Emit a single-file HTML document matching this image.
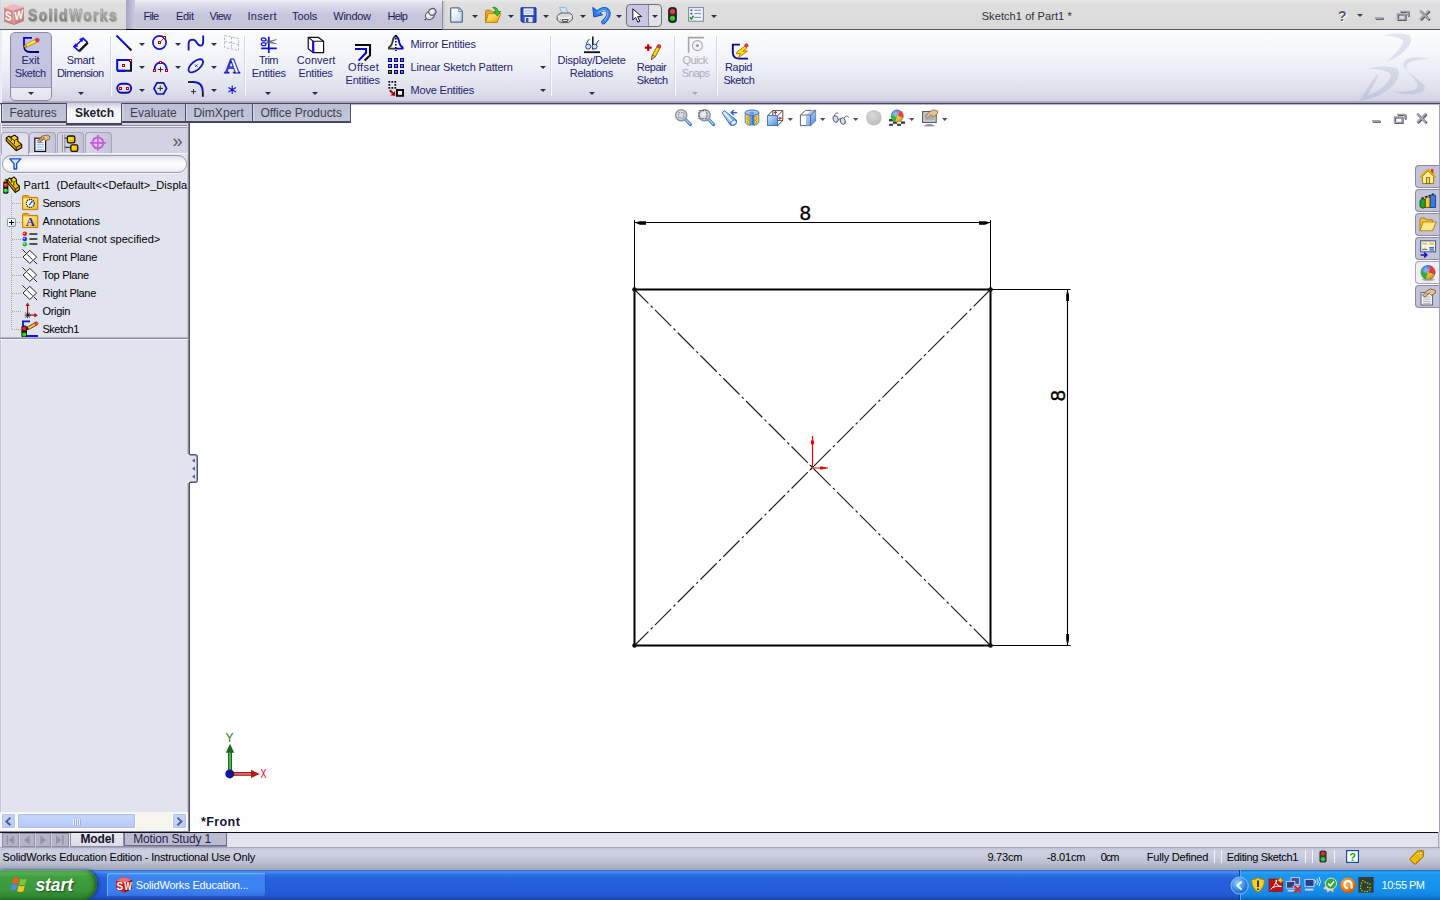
<!DOCTYPE html>
<html lang="en">
<head>
<meta charset="utf-8">
<title>Sketch1 of Part1 * - SolidWorks</title>
<style>
*{box-sizing:border-box;margin:0;padding:0}
html,body{width:1440px;height:900px;overflow:hidden;background:#fff}
body{position:relative;font-family:"Liberation Sans","DejaVu Sans",sans-serif;font-size:11px;color:#000;line-height:13px}
.abs{position:absolute}
svg{position:absolute;overflow:visible}
.t{position:absolute;white-space:nowrap}
#titlebar{left:0;top:0;width:1440px;height:29px;background:linear-gradient(#e8e8e8 0,#dedede 4px,#dadada 27px)}
#menus{left:135px;top:0;width:307px;height:28px;background:linear-gradient(#eeeef8 0,#dedeee 4px,#c6c6da 15px,#c4c4d8 27px)}
#menugrad{left:126px;top:0;width:9px;height:29px;background:linear-gradient(90deg,#a4a4c4,#cacae0)}
#ribbon{left:0;top:30px;width:1440px;height:73px;background:linear-gradient(#fbfcfe 0,#f6f7fb 20px,#eceef6 40px,#dfe1ed 58px,#d5d7e5 68px,#cdd0e0 73px)}
.sep{position:absolute;top:36px;width:2px;height:60px;background:linear-gradient(90deg,#d4d4e2 50%,#fcfcff 50%)}
.dd{position:absolute;width:0;height:0;border-left:3px solid transparent;border-right:3px solid transparent;border-top:3px solid #2c2c50}
.tab{position:absolute;top:104px;height:19px;background:linear-gradient(#bcbed2,#c4c6d9);border:1px solid #4e5068;border-top:none;border-bottom:2px solid #46485e;box-shadow:inset 1px 0 0 #d6d8e6}
#left{left:0;top:123px;width:188px;height:708px;background:#e1e4ee}
#btabs{left:0;top:833px;width:1440px;height:15px;background:#e1e4ee}
#status{left:0;top:847px;width:1440px;height:23px;background:linear-gradient(#8a8c9e 0,#c0c2d4 1px,#cdd0e0 4px,#cacddd 9px,#bec1d3 15px,#adb0c4 20px,#a2a5ba 23px)}
#taskbar{left:0;top:870px;width:1440px;height:30px;background:linear-gradient(#3168d5 0,#4993e6 2px,#2f75e8 4px,#2562df 8px,#245ddb 20px,#2156cf 26px,#1941a5 30px)}
</style>
</head>
<body>
<!-- ===== TITLE / MENU BAR ===== -->
<div id="titlebar" class="abs"></div>
<div id="menugrad" class="abs"></div>
<div id="menus" class="abs"></div>
<div class="abs" style="left:0;top:29px;width:126px;height:1px;background:#585868"></div>
<div class="abs" style="left:126px;top:29px;width:316px;height:1px;background:#000"></div>
<div class="abs" style="left:442px;top:29px;width:998px;height:1px;background:#54545e"></div>
<div class="abs" style="left:135px;top:28px;width:307px;height:1px;background:#dcdcee"></div>
<div class="abs" style="left:442px;top:1px;width:4px;height:28px;background:linear-gradient(90deg,#8e8e96 0,#8e8e96 1px,#c8c8cc 1px,#dcdcde 4px)"></div>
<div class="abs" style="left:0;top:0;width:1px;height:28px;background:#d4d4ec"></div>
<div id="logo">
<svg style="left:3px;top:3px" width="24" height="24" viewBox="3 3 24 24">
 <polygon points="4,7.5 13.3,4.2 24,7 13.5,10.3" fill="#ecbcbc"/>
 <polygon points="4,7.5 13.5,10.3 14,24.5 4,21" fill="#d88a8a"/>
 <polygon points="13.5,10.3 24,7 24,20.5 14,24.5" fill="#cf8282"/>
 <path d="M4 7.5 L13.5 10.3 L24 7 M13.5 10.3 L14 24.5" fill="none" stroke="#e8b4b4" stroke-width=".8"/>
 <path d="M4 21 L14 24.5 L24 20.5" fill="none" stroke="#b87070" stroke-width=".9"/>
 <text x="5" y="19.6" font-family="Liberation Sans,sans-serif" font-weight="bold" font-size="12.5" fill="#fff" transform="skewY(14)" style="transform-origin:5px 19px" textLength="6.6" lengthAdjust="spacingAndGlyphs">S</text>
 <text x="14.4" y="20.8" font-family="Liberation Sans,sans-serif" font-weight="bold" font-size="12.5" fill="#fff" textLength="8.8" lengthAdjust="spacingAndGlyphs" transform="skewY(-18)" style="transform-origin:14.4px 20.8px">W</text>
</svg>
<span class="t" style="left:28px;top:5.8px;font-size:16.5px;line-height:18px;color:#7c7c7c;transform:scaleX(0.830);transform-origin:0 0;font-weight:bold;letter-spacing:1.8px;filter:drop-shadow(1px 1px 0.6px #b4b4b4);-webkit-text-stroke:.4px #8a8a8a;"><b style="background:linear-gradient(#a8a8a8 5px,#646464 19px);-webkit-background-clip:text;background-clip:text;color:transparent">Solid</b><b style="background:linear-gradient(#c0c0c0 5px,#7c7c7c 19px);-webkit-background-clip:text;background-clip:text;color:transparent">Works</b></span>
</div>
<span class="t" style="left:143.5px;top:9.7px;font-size:11px;line-height:13px;color:#1c1c58;letter-spacing:-0.74px;">File</span>
<span class="t" style="left:176px;top:9.7px;font-size:11px;line-height:13px;color:#1c1c58;letter-spacing:-0.32px;">Edit</span>
<span class="t" style="left:209.6px;top:9.7px;font-size:11px;line-height:13px;color:#1c1c58;letter-spacing:-0.72px;">View</span>
<span class="t" style="left:247.5px;top:9.7px;font-size:11px;line-height:13px;color:#1c1c58;letter-spacing:0.30px;">Insert</span>
<span class="t" style="left:292px;top:9.7px;font-size:11px;line-height:13px;color:#1c1c58;letter-spacing:-0.10px;">Tools</span>
<span class="t" style="left:333.3px;top:9.7px;font-size:11px;line-height:13px;color:#1c1c58;letter-spacing:-0.28px;">Window</span>
<span class="t" style="left:387.5px;top:9.7px;font-size:11px;line-height:13px;color:#1c1c58;letter-spacing:-0.77px;">Help</span>
<span class="t" style="left:981.7px;top:9.7px;font-size:11px;line-height:13px;color:#303038;letter-spacing:0.08px;">Sketch1 of Part1 *</span>
<!-- pin -->
<svg style="left:424px;top:7px" width="14" height="15" viewBox="424 7 14 15">
 <defs><radialGradient id="gpin" cx=".4" cy=".35" r=".8"><stop offset="0" stop-color="#ffffff"/><stop offset=".6" stop-color="#d8d8e0"/><stop offset="1" stop-color="#9c9cb0"/></radialGradient></defs>
 <path d="M427.4 17.4 L424.8 20" stroke="#303038" stroke-width="1.3"/>
 <path d="M425.8 17.8 L424.6 19" stroke="#f4f4f8" stroke-width=".9"/>
 <ellipse cx="429.9" cy="15.5" rx="4.6" ry="3.9" fill="url(#gpin)" stroke="#54546c" stroke-width="1.1" transform="rotate(-30 429.9 15.5)"/>
 <ellipse cx="432.4" cy="11.9" rx="3.6" ry="3.3" fill="url(#gpin)" stroke="#54546c" stroke-width="1.1" transform="rotate(-30 432.4 11.9)"/>
</svg>
<!-- new doc -->
<svg style="left:449px;top:6px" width="15" height="18" viewBox="449 6 15 18">
 <defs><linearGradient id="gdoc" x1="0" y1="0" x2="1" y2="1"><stop offset=".2" stop-color="#ffffff"/><stop offset="1" stop-color="#b8d0e8"/></linearGradient></defs>
 <path d="M451.6 7.8 H459 L462.3 11.2 V21.2 Q462.3 22.2 461.3 22.2 H451.6 Q450.7 22.2 450.7 21.2 V8.8 Q450.7 7.8 451.6 7.8 Z" fill="url(#gdoc)" stroke="#52708e" stroke-width="1.3"/>
 <path d="M458.8 8.2 V11.6 H462" fill="#dce8f4" stroke="#6a88a6" stroke-width=".9"/>
</svg>
<div class="dd" style="left:472px;top:15px"></div>
<!-- open -->
<svg style="left:484px;top:6px" width="18" height="18" viewBox="484 6 18 18">
 <defs><linearGradient id="gfo" x1="0" y1="0" x2="1" y2="1"><stop offset="0" stop-color="#fff2a0"/><stop offset=".5" stop-color="#f8cc40"/><stop offset="1" stop-color="#e89410"/></linearGradient></defs>
 <path d="M485.6 22 V11.4 Q485.6 10.2 486.8 10.2 H490.4 L491.8 11.8 H496.6 V14" fill="#e8a828" stroke="#b87c10" stroke-width="1"/>
 <path d="M488.4 13.6 H500.8 L497.2 22.4 H485.6 Z" fill="url(#gfo)" stroke="#c08410" stroke-width="1"/>
 <path d="M492.6 7.4 Q497.6 6.6 498.2 11.6 L500.6 11.4 L497.4 16 L493.8 12 L496 11.8 Q495.8 9 492.6 7.4 Z" fill="#30c030" stroke="#188018" stroke-width=".7" stroke-linejoin="round"/>
</svg>
<div class="dd" style="left:508px;top:15px"></div>
<!-- save -->
<svg style="left:520px;top:7px" width="17" height="16" viewBox="0 0 17 16">
 <path d="M1 .8 H16 V15.2 H2.4 L1 13.8 Z" fill="#2c50c8" stroke="#14288c" stroke-width="1"/>
 <rect x="3.6" y="1.4" width="9.8" height="6.6" fill="#f4f6fc"/>
 <path d="M4.6 3.2 H12.4 M4.6 4.8 H12.4 M4.6 6.4 H12.4" stroke="#9cacd4" stroke-width=".7"/>
 <rect x="4.6" y="10" width="8" height="5.2" fill="#dfe4f0"/>
 <rect x="6" y="11" width="2.4" height="4.2" fill="#2c50c8"/>
</svg>
<div class="dd" style="left:543px;top:15px"></div>
<!-- print -->
<svg style="left:556px;top:6px" width="18" height="18" viewBox="556 6 18 18">
 <path d="M559.6 7.4 H565.6 L568.6 14.4 H562.4 Z" fill="#cfe2fa" stroke="#88a4d0" stroke-width=".8"/>
 <path d="M557.2 15.6 L561 13 H569.6 L572.4 15.2 V19.4 L568.6 22.6 H560.4 L557.2 20 Z" fill="#dcdcdc" stroke="#4c4c54" stroke-width=".9" stroke-linejoin="round"/>
 <path d="M557.4 15.8 L560.8 18.4 H568.8 L572.2 15.4" fill="none" stroke="#fafafa" stroke-width="1"/>
 <path d="M560.8 18.8 V22.4" stroke="#9c9ca4" stroke-width=".8"/>
 <path d="M562.4 19.6 H568.2 L567.2 21.6 H562.8 Z" fill="#fff" stroke="#2c2c34" stroke-width=".9"/>
</svg>
<div class="dd" style="left:580px;top:15px"></div>
<!-- undo -->
<svg style="left:592px;top:6px" width="18" height="18" viewBox="592 6 18 18">
 <path d="M603.4 22.2 Q610.6 15.4 607.6 10.8 Q604.4 6.8 597.6 12.4" fill="none" stroke="#1450b8" stroke-width="4.4" stroke-linecap="round"/>
 <path d="M592.8 7.4 L593.8 17 L602.6 14.8 Z" fill="#2c7ce8" stroke="#1450b8" stroke-width="1" stroke-linejoin="round"/>
 <path d="M603.4 22.2 Q610.6 15.4 607.6 10.8 Q604.4 6.8 597.6 12.4" fill="none" stroke="#3c8cf4" stroke-width="2.8" stroke-linecap="round"/>
 <path d="M604.6 20.2 Q609 14.8 606.6 11.6 Q604 8.8 599 12.2" fill="none" stroke="#9cc8fc" stroke-width=".9" stroke-linecap="round"/>
</svg>
<div class="dd" style="left:616px;top:15px"></div>
<!-- select button -->
<div class="abs" style="left:626px;top:4px;width:36px;height:23px;border:1px solid #70707c;border-radius:4px;background:linear-gradient(90deg,#c8c8e4 0,#c8c8e4 21px,#8c8c9c 21px,#8c8c9c 22px,#e2e2e6 22px)"></div>
<svg style="left:632px;top:8px" width="11" height="15" viewBox="0 0 11 15">
 <path d="M.8 .8 V12 L3.6 9.4 L5.8 14.2 L7.8 13.3 L5.7 8.6 H9.6 Z" fill="#fff" stroke="#14141c" stroke-width="1"/>
</svg>
<div class="dd" style="left:652px;top:15px"></div>
<!-- traffic light -->
<svg style="left:668px;top:7px" width="9" height="16" viewBox="0 0 9 16">
 <rect x=".6" y=".6" width="7.8" height="14.8" rx="2.6" fill="#2c2c2c" stroke="#101010" stroke-width=".8"/>
 <circle cx="4.5" cy="4.4" r="2.5" fill="#f03c3c"/>
 <circle cx="4.5" cy="11.2" r="2.5" fill="#34d034"/>
</svg>
<!-- options -->
<svg style="left:688px;top:7px" width="16" height="15" viewBox="0 0 16 15">
 <rect x=".6" y=".6" width="14.8" height="13.6" fill="#f0f4fa" stroke="#7488ac" stroke-width="1"/>
 <path d="M2.4 3.2 H4.4 M2.4 6.6 H4.4" stroke="#3c5ca4" stroke-width="1.6"/>
 <path d="M6.4 3.2 H13 M6.4 6.6 H13 M6.4 10.4 H13" stroke="#7c8cac" stroke-width="1"/>
 <path d="M1.8 10.2 L3.4 12 L5.6 8.8" stroke="#1c9c1c" stroke-width="1.6" fill="none"/>
</svg>
<div class="dd" style="left:711px;top:15px"></div>
<!-- help / window controls -->
<span class="t" style="left:1338px;top:8.1px;font-size:14px;line-height:16px;color:#5c5c68;font-weight:bold;text-shadow:1px 1px 0 #fff;">?</span>
<div class="dd" style="left:1357px;top:14px;border-top-color:#44444c"></div>
<svg style="left:1374px;top:9px" width="60" height="13" viewBox="0 0 60 13">
 <g stroke="#46464e" fill="none" transform="translate(.8,.8)">
  <path d="M1 9 H9" stroke-width="2"/><path d="M26 2.5 H34 V7 M23.5 5 H31 V10.5 H23.5 Z" stroke-width="1.6"/><path d="M46 1.5 L55 10.5 M55 1.5 L46 10.5" stroke-width="2.2"/>
 </g>
 <g stroke="#a2a2b2" fill="none">
  <path d="M1 9 H9" stroke-width="2"/><path d="M26 2.5 H34 V7 M23.5 5 H31 V10.5 H23.5 Z" stroke-width="1.6"/><path d="M46 1.5 L55 10.5 M55 1.5 L46 10.5" stroke-width="2.2"/>
 </g>
</svg>
<!-- ===== RIBBON (CommandManager) ===== -->
<div id="ribbon" class="abs"></div>
<div class="abs" style="left:0;top:101px;width:1440px;height:4px;background:linear-gradient(#b4b4ca 0,#a0a0b8 2px,#47475c 2px,#47475c 3px,#b8b8cc 3px)"></div>
<div class="abs" style="left:0;top:30px;width:2px;height:73px;background:linear-gradient(90deg,#e4e4f4,#f4f4fa)"></div>
<!-- 3DS watermark -->
<svg style="left:1356px;top:31px" width="78" height="72" viewBox="1356 31 78 72">
 <g fill="#7078b0" opacity=".17">
  <path d="M1383.3 35.6 Q1399 31.6 1409.6 35.2 Q1415.6 42 1401 54 Q1393.6 59.4 1386 62 Q1398.4 52 1403 42.4 Q1404.6 37 1383.3 35.6 Z"/>
  <path d="M1367.6 68.6 Q1384 64.6 1396.6 68.2 Q1403.4 74 1392 86.4 Q1380 97.6 1359 101.2 L1376.6 74.6 L1378.6 75.6 L1367.8 95.4 Q1384.6 90 1391 76.6 Q1391.6 70 1367.6 68.6 Z"/>
  <path d="M1430 59 Q1418 55.6 1408 58.4 Q1400.6 62 1405 68.6 L1423 84 Q1428.6 90 1418 93.4 Q1405 96 1392 91.4 Q1408 92.6 1415.6 89 Q1420 86 1414.6 80 L1407 69.6 Q1404 62.6 1415.6 60.4 Q1424 59 1430 59 Z"/>
 </g>
</svg>
<!-- Exit Sketch button -->
<div class="abs" style="left:10px;top:32px;width:42px;height:69px;border:1px solid #8a8aa2;border-radius:5px;background:linear-gradient(#c6c6e2 0,#c2c2de 54px,#9c9cb4 54px,#9c9cb4 55px,#ececf4 55px,#e2e2ee 69px)"></div>
<svg style="left:22px;top:36px" width="18" height="18" viewBox="0 0 18 18">
 <path d="M10 1.8 H2 V9" stroke="#0000dc" stroke-width="1.8" fill="none"/>
 <path d="M2 9 V10.5 Q2.4 16 8 16 H17" stroke="#000080" stroke-width="1.8" fill="none"/>
 <path d="M1.3 10.9 L3.6 8.4 L14 3 L15.9 5.9 L5 11 Z" fill="#ffd800" stroke="#c87800" stroke-width=".7"/>
 <path d="M4.4 9.3 L14.6 4.2" stroke="#fff8b0" stroke-width="1"/>
 <path d="M1.3 10.9 L3.6 8.4 L5 11 Z" fill="#d8b888" stroke="#705020" stroke-width=".5"/>
 <circle cx="15.3" cy="4.1" r="1.9" fill="#e83848" stroke="#a01020" stroke-width=".5"/>
</svg>
<span class="t" style="left:21.4px;top:53.7px;font-size:11px;line-height:13px;color:#23236e;letter-spacing:-0.05px;">Exit</span>
<span class="t" style="left:14.8px;top:66.7px;font-size:11px;line-height:13px;color:#23236e;letter-spacing:-0.45px;">Sketch</span>
<div class="dd" style="left:28px;top:92px"></div>
<!-- Smart Dimension -->
<svg style="left:72px;top:36px" width="17" height="17" viewBox="72 36 17 17">
 <polygon points="82.5,37.6 87.6,42.6 79,51.2 73.2,46.4" fill="#fff"/>
 <path d="M73.4 46.2 L79 51.2 M82.4 37.6 L87.6 42.6" stroke="#1414e6" stroke-width="1.7" fill="none"/>
 <path d="M79 51.4 L87.8 42.6" stroke="#141414" stroke-width="2.3" fill="none"/>
 <path d="M75.2 46.2 L82.4 39.4" stroke="#1414e6" stroke-width="1.5"/>
 <path d="M73.6 46.6 L77.8 46.4 L75.8 43.6 Z M83 38 L79.6 39.2 L82 41.8 Z" fill="#1414e6" stroke="#1414e6" stroke-width=".8" stroke-linejoin="round"/>
</svg>
<span class="t" style="left:66.7px;top:53.7px;font-size:11px;line-height:13px;color:#23236e;letter-spacing:-0.34px;">Smart</span>
<span class="t" style="left:57px;top:66.7px;font-size:11px;line-height:13px;color:#23236e;letter-spacing:-0.62px;">Dimension</span>
<div class="dd" style="left:78px;top:92px"></div>
<div class="sep" style="left:110px"></div>
<!-- sketch tools grid -->
<svg style="left:114px;top:32px" width="130" height="68" viewBox="114 32 130 68">
 <defs>
  <linearGradient id="gln" x1="0" y1="0" x2="1" y2="1"><stop offset=".6" stop-color="#1010d8"/><stop offset=".8" stop-color="#101020"/></linearGradient>
 </defs>
 <!-- line -->
 <path d="M116.5 35.5 L131.5 50.5" stroke="url(#gln)" stroke-width="1.9"/>
 <!-- circle -->
 <circle cx="159.5" cy="42.5" r="6.6" fill="none" stroke="#1818c8" stroke-width="1.7"/>
 <path d="M159.5 42.5 L164.5 37.5" stroke="#202060" stroke-width=".8"/>
 <rect x="158.5" y="41.5" width="2" height="2" fill="#fff" stroke="#c00000" stroke-width="1"/>
 <rect x="163.5" y="36.5" width="2" height="2" fill="#fff" stroke="#c00000" stroke-width="1"/>
 <!-- spline -->
 <path d="M188.6 50.5 V43 Q189 39.6 192.5 39.6 Q195.5 39.8 197 43 Q198.6 46 201 45.6 Q203.2 45 203.2 41.5 V35.5" fill="none" stroke="#1818c8" stroke-width="1.9"/>
 <!-- grid gray -->
 <g stroke="#b8b8c0" stroke-width="1" fill="none" stroke-dasharray="2.5 1.5">
  <path d="M224.5 35.5 L238.5 38.5 V50.5 L224.5 47.5 Z M231.5 37 V49 M224.5 41.5 L238.5 44.5"/>
 </g>
 <!-- rectangle -->
 <path d="M131 60 H117.2 V70.8" fill="none" stroke="#0c0ce0" stroke-width="2"/>
 <path d="M117.2 70.8 H131 V60" fill="none" stroke="#101040" stroke-width="2"/>
 <path d="M117.2 70.8 H126" fill="none" stroke="#0c0ce0" stroke-width="2"/>
 <rect x="122.5" y="64.5" width="2" height="2" fill="#fff" stroke="#c00000" stroke-width="1"/>
 <rect x="129.5" y="59.5" width="2" height="2" fill="#fff" stroke="#c00000" stroke-width="1"/>
 <!-- arc -->
 <path d="M154.4 70.5 Q154.6 62.6 160.5 62.6 Q166.6 62.6 166.8 70.5" fill="none" stroke="#1818c8" stroke-width="1.7"/>
 <path d="M157.8 69.5 H163.2 M160.5 66.8 V72.2" stroke="#303030" stroke-width="1"/>
 <rect x="159.5" y="61.5" width="2" height="2" fill="#fff" stroke="#c00000" stroke-width="1"/>
 <rect x="153.5" y="69.5" width="2" height="2" fill="#fff" stroke="#c00000" stroke-width="1"/>
 <rect x="165.5" y="69.5" width="2" height="2" fill="#fff" stroke="#c00000" stroke-width="1"/>
 <!-- ellipse -->
 <ellipse cx="195.8" cy="65.8" rx="8.8" ry="4.3" transform="rotate(-40 195.8 65.8)" fill="none" stroke="#1818b8" stroke-width="1.8"/>
 <path d="M195 64.4 L197.6 67 M197.6 64.4 L195 67" stroke="#303030" stroke-width=".8"/>
 <!-- text A -->
 <text x="232.1" y="73" text-anchor="middle" font-family="Liberation Serif,serif" font-weight="bold" font-size="22" fill="#fff" stroke="#1010c0" stroke-width="1" textLength="15.6" lengthAdjust="spacingAndGlyphs">A</text>
 <!-- slot -->
 <rect x="117.2" y="83.8" width="14" height="9" rx="4.5" fill="none" stroke="#0c0cb0" stroke-width="1.9"/>
 <rect x="119.5" y="87.5" width="2" height="2" fill="#fff" stroke="#c00000" stroke-width="1"/>
 <rect x="126.5" y="87.5" width="2" height="2" fill="#fff" stroke="#c00000" stroke-width="1"/>
 <!-- polygon -->
 <path d="M154 88.4 L157 82.8 H163.6 L166.6 88.4 L163.6 94 H157 Z" fill="none" stroke="#1010b8" stroke-width="1.7"/>
 <path d="M157.6 88.4 H163 M160.3 85.7 V91.1" stroke="#303030" stroke-width="1"/>
 <!-- fillet -->
 <path d="M188 82 H193" stroke="#101010" stroke-width="1.8"/>
 <path d="M193 82 Q202.8 82 202.8 92" fill="none" stroke="#1010d0" stroke-width="1.8"/>
 <path d="M202.8 92 V96.8" stroke="#101010" stroke-width="1.8"/>
 <path d="M191 91.6 H196 M193.5 89.1 V94.1" stroke="#303030" stroke-width="1"/>
 <!-- point -->
 <path d="M232.2 85.4 V94 M228.4 87.5 L236 91.9 M236 87.5 L228.4 91.9" stroke="#1010d0" stroke-width="1.1"/>
</svg>
<div class="dd" style="left:139px;top:43px"></div>
<div class="dd" style="left:175px;top:43px"></div>
<div class="dd" style="left:211px;top:43px"></div>
<div class="dd" style="left:139px;top:66px"></div>
<div class="dd" style="left:175px;top:66px"></div>
<div class="dd" style="left:211px;top:66px"></div>
<div class="dd" style="left:139px;top:89px"></div>
<div class="dd" style="left:211px;top:89px"></div>
<div class="sep" style="left:244px"></div>
<!-- Trim -->
<svg style="left:260px;top:36px" width="18" height="18" viewBox="0 0 18 18">
 <path d="M8.8 .8 V17 M1.2 12.4 H16.8" stroke="#1010d8" stroke-width="1.7"/>
 <ellipse cx="3.6" cy="3.4" rx="2.3" ry="1.5" fill="none" stroke="#1010d8" stroke-width="1.3"/>
 <ellipse cx="3.6" cy="8.2" rx="2.3" ry="1.5" fill="none" stroke="#1010d8" stroke-width="1.3"/>
 <path d="M5.6 4 L16.4 7.8 L8 6.6 Z M5.6 7.6 L16.4 3.6 L8 5.4 Z" fill="#808088" stroke="#505058" stroke-width=".5"/>
</svg>
<span class="t" style="left:259px;top:53.7px;font-size:11px;line-height:13px;color:#23236e;letter-spacing:-0.76px;">Trim</span>
<span class="t" style="left:251.7px;top:66.7px;font-size:11px;line-height:13px;color:#23236e;letter-spacing:-0.24px;">Entities</span>
<div class="dd" style="left:265px;top:92px"></div>
<!-- Convert -->
<svg style="left:307px;top:36px" width="18" height="18" viewBox="0 0 18 18">
 <path d="M1.2 1.4 H11.4 L16.6 5.2 V16.6 H6.2 L1.2 12.6 Z" fill="#fff" stroke="#101010" stroke-width="1.2"/>
 <path d="M1.2 1.4 L6.2 5.2 H16.6 M6.2 5.2 V16.6" fill="none" stroke="#101010" stroke-width="1.1"/>
 <path d="M6.2 5.2 V16.6" stroke="#1010e8" stroke-width="2.2"/>
</svg>
<span class="t" style="left:296.8px;top:53.7px;font-size:11px;line-height:13px;color:#23236e;letter-spacing:0.01px;">Convert</span>
<span class="t" style="left:298.4px;top:66.7px;font-size:11px;line-height:13px;color:#23236e;letter-spacing:-0.24px;">Entities</span>
<div class="dd" style="left:312px;top:92px"></div>
<!-- Offset -->
<svg style="left:354px;top:43px" width="18" height="18" viewBox="354 43 18 18">
 <path d="M355 45 H370 V55.4 L364.6 60.6" fill="none" stroke="#080808" stroke-width="2.1"/>
 <path d="M355 49 H366 V52.8 L358.6 60.6" fill="none" stroke="#0808c8" stroke-width="2.1"/>
</svg>
<span class="t" style="left:348px;top:60.7px;font-size:11px;line-height:13px;color:#23236e;letter-spacing:0.33px;">Offset</span>
<span class="t" style="left:345.6px;top:73.7px;font-size:11px;line-height:13px;color:#23236e;letter-spacing:-0.24px;">Entities</span>
<!-- Mirror / Linear / Move -->
<svg style="left:387px;top:34px" width="18" height="18" viewBox="387 34 18 18">
 <path d="M395.8 35.8 Q393.2 37 392.4 42.4 Q391.6 45.6 389 47.4 V48.6 H395.8" fill="none" stroke="#383838" stroke-width="1.9"/>
 <path d="M395.8 35.8 Q398.4 37 399.2 42.4 Q400 45.6 402.6 47.4 V48.6 H395.8" fill="none" stroke="#0808c0" stroke-width="1.9"/>
 <path d="M395.8 35 V51" stroke="#080808" stroke-width="1.7" stroke-dasharray="1.6 1.4"/>
</svg>
<span class="t" style="left:410.6px;top:37.7px;font-size:11px;line-height:13px;color:#23236e;letter-spacing:-0.17px;">Mirror Entities</span>
<svg style="left:388px;top:58px" width="16" height="16" viewBox="388 58 16 16">
 <rect x="388" y="58" width="4" height="4" fill="#04048c"/><rect x="389" y="59" width="1.8" height="1.8" fill="#8494ff"/><rect x="394" y="58" width="4" height="4" fill="#04048c"/><rect x="395" y="59" width="1.8" height="1.8" fill="#8494ff"/><rect x="400" y="58" width="4" height="4" fill="#04048c"/><rect x="401" y="59" width="1.8" height="1.8" fill="#8494ff"/><rect x="388" y="64" width="4" height="4" fill="#04048c"/><rect x="389" y="65" width="1.8" height="1.8" fill="#8494ff"/><rect x="394" y="64" width="4" height="4" fill="#04048c"/><rect x="395" y="65" width="1.8" height="1.8" fill="#8494ff"/><rect x="400" y="64" width="4" height="4" fill="#04048c"/><rect x="401" y="65" width="1.8" height="1.8" fill="#8494ff"/><rect x="388" y="70" width="4" height="4" fill="#101010"/><rect x="389" y="71" width="1.6" height="1.6" fill="#a0a0a0"/><rect x="394" y="70" width="4" height="4" fill="#04048c"/><rect x="395" y="71" width="1.8" height="1.8" fill="#8494ff"/><rect x="400" y="70" width="4" height="4" fill="#04048c"/><rect x="401" y="71" width="1.8" height="1.8" fill="#8494ff"/>
</svg>
<span class="t" style="left:410.6px;top:60.7px;font-size:11px;line-height:13px;color:#23236e;letter-spacing:-0.17px;">Linear Sketch Pattern</span>
<svg style="left:388px;top:81px" width="16" height="16" viewBox="388 81 16 16">
 <rect x="388.4" y="81" width="1.8" height="1.8" fill="#181818"/><rect x="391.4" y="81" width="1.8" height="1.8" fill="#181818"/><rect x="394.4" y="81" width="1.8" height="1.8" fill="#181818"/><rect x="388.4" y="84" width="1.8" height="1.8" fill="#181818"/><rect x="394.4" y="84" width="1.8" height="1.8" fill="#181818"/><rect x="388.4" y="87" width="1.8" height="1.8" fill="#181818"/><rect x="391.4" y="87" width="1.8" height="1.8" fill="#181818"/><rect x="394.4" y="87" width="1.8" height="1.8" fill="#181818"/>
 <rect x="397" y="90" width="6" height="5.8" fill="#f4f4fa" stroke="#101010" stroke-width="2"/>
 <path d="M389.8 90.2 L393 93.4" stroke="#a00000" stroke-width="2"/>
 <path d="M395.4 95.8 L390.4 95.6 L395 91 Z" fill="#a00000"/>
</svg>
<span class="t" style="left:410.6px;top:83.7px;font-size:11px;line-height:13px;color:#23236e;letter-spacing:-0.20px;">Move Entities</span>
<div class="dd" style="left:540px;top:66px"></div>
<div class="dd" style="left:540px;top:89px"></div>
<div class="sep" style="left:550px"></div>
<!-- Display/Delete Relations -->
<svg style="left:583px;top:36px" width="18" height="18" viewBox="0 0 18 18">
 <path d="M1 16.2 H17" stroke="#101010" stroke-width="1.8"/>
 <path d="M9.8 .6 V13.4" stroke="#101010" stroke-width="1.5"/>
 <circle cx="5.2" cy="10.6" r="2.5" fill="#d0e4f8" stroke="#284080" stroke-width="1"/>
 <circle cx="11.6" cy="10.6" r="2.5" fill="#d0e4f8" stroke="#284080" stroke-width="1"/>
 <path d="M3.4 8.6 Q4 3.6 6.6 3.4 M13.4 8.8 Q14.2 4.4 16 4.4" fill="none" stroke="#284080" stroke-width="1"/>
</svg>
<span class="t" style="left:557.6px;top:53.7px;font-size:11px;line-height:13px;color:#23236e;letter-spacing:-0.21px;">Display/Delete</span>
<span class="t" style="left:569.8px;top:66.7px;font-size:11px;line-height:13px;color:#23236e;letter-spacing:-0.31px;">Relations</span>
<div class="dd" style="left:589px;top:92px"></div>
<!-- Repair Sketch -->
<svg style="left:644px;top:43px" width="18" height="18" viewBox="0 0 18 18">
 <path d="M.8 4.6 H7.6 M4.2 1.2 V8" stroke="#c00000" stroke-width="2.1"/>
 <path d="M7.4 16.6 L8.4 12 L13.4 2.8 L16.4 4.4 L11.4 13.6 Z" fill="#ffd800" stroke="#705010" stroke-width=".8"/>
 <path d="M7.4 16.6 L8.4 12 L11.4 13.6 Z" fill="#e8c8a0" stroke="#403010" stroke-width=".6"/>
 <circle cx="15" cy="3.2" r="1.8" fill="#e83848" stroke="#a01020" stroke-width=".5"/>
</svg>
<span class="t" style="left:636.8px;top:60.7px;font-size:11px;line-height:13px;color:#23236e;letter-spacing:-0.52px;">Repair</span>
<span class="t" style="left:636.8px;top:73.7px;font-size:11px;line-height:13px;color:#23236e;letter-spacing:-0.45px;">Sketch</span>
<div class="sep" style="left:674px"></div>
<!-- Quick Snaps (disabled) -->
<svg style="left:687px;top:36px" width="18" height="18" viewBox="0 0 18 18">
 <path d="M1.6 16.8 V1.6 H16.8" fill="none" stroke="#a4a4ac" stroke-width="1.6"/>
 <circle cx="10.4" cy="9.6" r="5" fill="#f4f4f8" stroke="#a8a8b0" stroke-width="1.1"/>
 <circle cx="10.4" cy="9.6" r="1.6" fill="#a0a0a8"/>
</svg>
<span class="t" style="left:682.6px;top:53.7px;font-size:11px;line-height:13px;color:#aeaeb6;letter-spacing:-0.63px;">Quick</span>
<span class="t" style="left:681.8px;top:66.7px;font-size:11px;line-height:13px;color:#aeaeb6;letter-spacing:-0.75px;">Snaps</span>
<div class="dd" style="left:692px;top:92px;border-top-color:#a8a8b0"></div>
<div class="sep" style="left:716px"></div>
<!-- Rapid Sketch -->
<svg style="left:731px;top:43px" width="18" height="18" viewBox="0 0 18 18">
 <path d="M9 1.6 H1.8 V10 Q2.4 15.6 8 15.6 H17" fill="none" stroke="#0a0a90" stroke-width="1.9"/>
 <path d="M6.4 8.4 L14.6 2.8 L15.8 5.4 L12 8 L16.4 8 L6.8 15.4 L9.4 10.6 L5.4 10.8 Z" fill="#ffe000" stroke="#b06000" stroke-width=".8"/>
 <circle cx="15.4" cy="2.4" r="1.7" fill="#e83848" stroke="#a01020" stroke-width=".5"/>
</svg>
<span class="t" style="left:725px;top:60.7px;font-size:11px;line-height:13px;color:#23236e;letter-spacing:-0.34px;">Rapid</span>
<span class="t" style="left:723.4px;top:73.7px;font-size:11px;line-height:13px;color:#23236e;letter-spacing:-0.45px;">Sketch</span>
<!-- ===== FEATURE MANAGER (left panel) ===== -->
<div id="left" class="abs"></div>
<div class="abs" style="left:0;top:123px;width:188px;height:30px;background:#d2d2e2"></div>
<div class="abs" style="left:0;top:125px;width:188px;height:3px;background:linear-gradient(#8a8aa2 0,#8a8aa2 1px,#f0f0f8 1px,#f0f0f8 2px,#9c9cb2 2px)"></div>
<div class="abs" style="left:187px;top:123px;width:3px;height:709px;background:linear-gradient(90deg,#c4c4d4 0,#c4c4d4 1px,#8888a0 1px,#8888a0 2px,#4c4c66 2px)"></div>
<div class="abs" style="left:0;top:123px;width:2px;height:708px;background:linear-gradient(90deg,#c4c4d8 50%,#eeeef6 50%)"></div>
<!-- panel tabs -->
<div class="abs" style="left:29px;top:132px;width:27px;height:22px;border:1px solid #a4a4ba;border-bottom:none;border-radius:4px 4px 0 0;background:linear-gradient(90deg,#d8d8e6,#c4c4d6)"></div>
<div class="abs" style="left:57px;top:132px;width:27px;height:22px;border:1px solid #a4a4ba;border-bottom:none;border-radius:4px 4px 0 0;background:linear-gradient(90deg,#d8d8e6,#c4c4d6)"></div>
<div class="abs" style="left:85px;top:132px;width:27px;height:22px;border:1px solid #a4a4ba;border-bottom:none;border-radius:4px 4px 0 0;background:linear-gradient(90deg,#d8d8e6,#c4c4d6)"></div>
<div class="abs" style="left:0;top:153px;width:188px;height:1px;background:#f2f2f8"></div>
<div class="abs" style="left:1px;top:132px;width:28px;height:23px;border:1px solid #a8a8c0;border-bottom:none;border-radius:4px 4px 0 0;background:linear-gradient(#dcdce8,#e4e4ee 8px)"></div>
<!-- tab icon 1: feature tree -->
<svg style="left:0;top:130px" width="116" height="26" viewBox="0 130 116 26">
 <defs><linearGradient id="gyel" x1="0" y1="0" x2="1" y2="1"><stop offset="0" stop-color="#fff060"/><stop offset=".5" stop-color="#f8d000"/><stop offset="1" stop-color="#e0a000"/></linearGradient></defs>
 <path d="M6.4 137.8 L9 136.2 L11.2 138 L11.2 136.8 L14.6 135.2 L17.8 137.6 L17.8 141.4 L21.6 144.4 L21.6 147.8 L16.2 150.6 L6.4 140.8 Z" fill="url(#gyel)" stroke="#181000" stroke-width="1.2" stroke-linejoin="round"/>
 <path d="M6.4 140.8 L16.2 150.6 L21.6 147.8 L21.6 144.4 L16.2 147.2 L6.4 137.8 Z" fill="#d09c00" stroke="#181000" stroke-width=".9" stroke-linejoin="round"/>
 <path d="M16.2 147.2 V150.6 M11.2 138 L14.4 140.6 L17.8 138.6 M14.4 140.6 V144 M11.2 138 V141" fill="none" stroke="#181000" stroke-width=".9"/>
 <!-- tab icon 2: property manager -->
 <rect x="34.8" y="138.2" width="10.8" height="13.2" fill="#fff" stroke="#101018" stroke-width="1.2"/>
 <path d="M36.6 142.6 H43.8 M36.6 144.8 H43.8 M36.6 147 H43.8 M36.6 149.2 H43.8" stroke="#78b0f8" stroke-width="1.1"/>
 <path d="M37.4 141 L42.4 135.8 L47.6 135.2 L50 136.6 L49.4 139.4 L45.6 140.6 L44 139.2 L39.4 142.6 Z" fill="#e8b880" stroke="#80582c" stroke-width=".8"/>
 <path d="M38.6 141 L42.8 136.6 M40 142 L44.4 137.6 M39 139.4 L41.4 141.6 M40.6 137.8 L43 140 M42.2 136.4 L44.4 138.6" stroke="#80582c" stroke-width=".6"/>
 <!-- tab icon 3: configuration manager -->
 <path d="M63.6 134.4 V151.8" stroke="#e0e0e4" stroke-width="1.8"/>
 <path d="M62.4 134.4 V151.8 M64.8 134.4 V151.8" stroke="#707078" stroke-width=".7"/>
 <path d="M64.8 138.2 H68 M64.8 147.4 H71" stroke="#404048" stroke-width="1.2"/>
 <rect x="67.4" y="136" width="7.4" height="6.8" rx="1.6" fill="url(#gyel)" stroke="#181000" stroke-width="1.3"/>
 <rect x="70.8" y="144.8" width="7" height="6.6" rx="1.6" fill="url(#gyel)" stroke="#181000" stroke-width="1.3"/>
 <!-- tab icon 4: dimxpert manager -->
 <circle cx="97.9" cy="142.9" r="5.5" fill="none" stroke="#c858e4" stroke-width="1.9"/>
 <path d="M97.9 135 V150.8 M90 142.9 H105.8" stroke="#c858e4" stroke-width="1.6"/>
</svg>
<span class="t" style="left:172.6px;top:131.4px;font-size:18px;line-height:20px;color:#585868;">&raquo;</span>
<!-- filter box -->
<div class="abs" style="left:2px;top:155px;width:185px;height:18px;border:1px solid #9a9aae;border-radius:9px;background:linear-gradient(#dcdce8 0,#f6f6fa 5px,#ffffff 9px,#f0f0f6 14px,#d8d8e4 18px);box-shadow:0 1px 0 #f6f6fa"></div>
<svg style="left:9px;top:158px" width="13" height="12" viewBox="0 0 13 12">
 <path d="M.8 .9 H11.8 L7.6 5.6 V11 H5 V5.6 Z" fill="#d8ecff" stroke="#1848d8" stroke-width="1.4" stroke-linejoin="round"/>
</svg>
<!-- tree dotted lines -->
<svg style="left:0;top:176px" width="40" height="160" viewBox="0 176 40 160">
 <g stroke="#a8a898" stroke-width="1" stroke-dasharray="1 1" fill="none">
  <path d="M11.5 194 V329.5"/>
  <path d="M12 203.5 H22 M17 222.5 H22 M12 239.5 H22 M12 257.5 H22 M12 275.5 H22 M12 293.5 H22 M12 311.5 H22 M12 329.5 H22"/>
 </g>
</svg>
<!-- root part icon -->
<svg style="left:2px;top:176px" width="19" height="19" viewBox="2 176 19 19">
 <g transform="translate(2.6 41.8) scale(.78 1)">
  <path d="M6.4 137.8 L9 136.2 L11.2 138 L11.2 136.8 L14.6 135.2 L17.8 137.6 L17.8 141.4 L21.6 144.4 L21.6 147.8 L16.2 150.6 L6.4 140.8 Z" fill="url(#gyel)" stroke="#181000" stroke-width="1.2" stroke-linejoin="round"/>
  <path d="M6.4 140.8 L16.2 150.6 L21.6 147.8 L21.6 144.4 L16.2 147.2 L6.4 137.8 Z" fill="#d09c00" stroke="#181000" stroke-width=".9" stroke-linejoin="round"/>
  <path d="M16.2 147.2 V150.6 M11.2 138 L14.4 140.6 L17.8 138.6 M14.4 140.6 V144 M11.2 138 V141" fill="none" stroke="#181000" stroke-width=".9"/>
 </g>
 <rect x="3.2" y="181.4" width="5.2" height="12.4" rx="1.6" fill="#181818"/>
 <path d="M3.4 181.6 L5.4 179 L7.4 179.4 L8.4 181.6 Z" fill="#181818"/>
 <circle cx="5" cy="180.6" r=".9" fill="#f8d000"/>
 <circle cx="5.8" cy="185" r="2.1" fill="#f02818"/><circle cx="5.3" cy="184.4" r=".7" fill="#ffa898"/>
 <circle cx="5.8" cy="190.6" r="2.1" fill="#18e018"/><circle cx="5.3" cy="190" r=".7" fill="#b8ffb8"/>
</svg>
<span class="t" style="left:23.6px;top:178.7px;font-size:11px;line-height:13px;color:#000;letter-spacing:0.06px;">Part1&nbsp; (Default&lt;&lt;Default&gt;_Displa</span>
<!-- sensors folder -->
<svg style="left:22px;top:195px" width="17" height="16" viewBox="0 0 17 16">
 <defs><linearGradient id="gfol" x1="0" y1="0" x2="1" y2="1"><stop offset="0" stop-color="#fff8a0"/><stop offset="1" stop-color="#f4b820"/></linearGradient></defs>
 <path d="M.6 14.6 V1.6 Q.6 .6 1.6 .6 H5.8 Q6.6 .6 6.8 1.4 L7 2.4 H15 Q15.8 2.4 15.8 3.2 V14.6 Z" fill="#f0a818" stroke="#c87800" stroke-width="1"/>
 <rect x="1.4" y="3.4" width="13.6" height="10.6" fill="url(#gfol)"/>
 <circle cx="8.3" cy="8.4" r="4" fill="#fff" stroke="#282830" stroke-width="1.2" stroke-dasharray="1.4 .7"/>
 <path d="M7.2 10 L10.6 6" stroke="#2060e0" stroke-width="1.3"/>
</svg>
<span class="t" style="left:42.5px;top:196.7px;font-size:11px;line-height:13px;color:#000;letter-spacing:-0.43px;">Sensors</span>
<!-- plus box -->
<div class="abs" style="left:7px;top:218px;width:9px;height:9px;border:1px solid #7898b8;border-radius:1.5px;background:linear-gradient(135deg,#fff 40%,#d8d0c0)"></div>
<div class="abs" style="left:9px;top:222px;width:5px;height:1px;background:#000"></div>
<div class="abs" style="left:11px;top:220px;width:1px;height:5px;background:#000"></div>
<!-- annotations folder -->
<svg style="left:22px;top:213px" width="17" height="16" viewBox="0 0 17 16">
 <path d="M.6 14.6 V1.6 Q.6 .6 1.6 .6 H5.8 Q6.6 .6 6.8 1.4 L7 2.4 H15 Q15.8 2.4 15.8 3.2 V14.6 Z" fill="#f0a818" stroke="#c87800" stroke-width="1"/>
 <rect x="1.4" y="3.4" width="13.6" height="10.6" fill="url(#gfol)"/>
 <text x="3.8" y="13.4" font-family="Liberation Serif,serif" font-weight="bold" font-size="12.5" fill="#1830d0">A</text>
</svg>
<span class="t" style="left:42.5px;top:214.7px;font-size:11px;line-height:13px;color:#000;letter-spacing:-0.05px;">Annotations</span>
<!-- material -->
<svg style="left:22px;top:231px" width="17" height="16" viewBox="0 0 17 16">
 <circle cx="2.8" cy="2.8" r="2.3" fill="#e82020"/><circle cx="2.8" cy="8" r="2.3" fill="#2030e0"/><circle cx="2.8" cy="13.2" r="2.3" fill="#20c020"/>
 <circle cx="2.2" cy="2.2" r=".8" fill="#ffc0c0"/><circle cx="2.2" cy="7.4" r=".8" fill="#c0c8ff"/><circle cx="2.2" cy="12.6" r=".8" fill="#c0ffc0"/>
 <path d="M7.4 3 H15.4 M7.4 8 H15.4 M7.4 13 H15.4" stroke="#202020" stroke-width="1.5"/>
</svg>
<span class="t" style="left:42.5px;top:232.7px;font-size:11px;line-height:13px;color:#000;letter-spacing:0.04px;">Material &lt;not specified&gt;</span>
<!-- planes -->
<svg style="left:21px;top:248px" width="18" height="54" viewBox="0 0 18 54">
 <g id="pln" fill="none" stroke="#181818" stroke-width=".95">
  <path d="M8.8 2.4 L15.6 9 L8.8 15.4 L2 9 Z" fill="#fff"/>
  <path d="M1.4 1.4 L4.8 4.8 M12.8 12.8 L16 16 M6.2 6.4 L11.4 11.6"/>
 </g>
 <use href="#pln" y="18"/>
 <use href="#pln" y="36"/>
</svg>
<span class="t" style="left:42.5px;top:250.7px;font-size:11px;line-height:13px;color:#000;letter-spacing:-0.21px;">Front Plane</span>
<span class="t" style="left:42.5px;top:268.7px;font-size:11px;line-height:13px;color:#000;letter-spacing:-0.29px;">Top Plane</span>
<span class="t" style="left:42.5px;top:286.7px;font-size:11px;line-height:13px;color:#000;letter-spacing:-0.31px;">Right Plane</span>
<!-- origin -->
<svg style="left:22px;top:302px" width="17" height="17" viewBox="0 0 17 17">
 <path d="M5.6 13.2 V2.4 M5.6 13.2 H13.6" stroke="#b01010" stroke-width="1.2"/>
 <path d="M5.6 .6 L3.4 4 H7.8 Z M15.8 13.2 L12.4 11 V15.4 Z" fill="#b01010"/>
 <path d="M3.2 10.8 L8 15.6 M8 10.8 L3.2 15.6 M2.6 13.2 H8.6 M5.6 10.2 V16.2" stroke="#101010" stroke-width=".8"/>
</svg>
<span class="t" style="left:42.5px;top:304.7px;font-size:11px;line-height:13px;color:#000;letter-spacing:-0.31px;">Origin</span>
<!-- sketch1 -->
<svg style="left:21px;top:320px" width="18" height="18" viewBox="0 0 18 18">
 <path d="M1 1.4 H9" stroke="#1010e0" stroke-width="1.8"/>
 <path d="M2 1.4 V16 H17" stroke="#1010e0" stroke-width="1.8" fill="none"/>
 <path d="M4.6 9.4 L6.4 6.8 L14.4 2.4 L16 5 L8 9.4 Z" fill="#f8b830" stroke="#583808" stroke-width=".8"/>
 <path d="M4.6 9.4 L6.4 6.8 L8 9.4 Z" fill="#181818"/>
 <circle cx="15.4" cy="3.4" r="1.6" fill="#e84858" stroke="#802020" stroke-width=".5"/>
 <rect x=".4" y="5.6" width="5.6" height="12" rx="1.8" fill="#181818"/>
 <circle cx="3.2" cy="8.6" r="2.1" fill="#f02020"/>
 <circle cx="3.2" cy="14.6" r="2.1" fill="#20e020"/>
</svg>
<span class="t" style="left:42.5px;top:322.7px;font-size:11px;line-height:13px;color:#000;letter-spacing:-0.49px;">Sketch1</span>
<div class="abs" style="left:0;top:337px;width:188px;height:3px;background:linear-gradient(#b4b4c8 0,#b4b4c8 1px,#8e8ea6 1px,#8e8ea6 2px,#f2f2f8 2px)"></div>
<!-- horizontal scrollbar (XP style) -->
<div class="abs" style="left:0;top:812px;width:188px;height:19px;background:#f6f6ee"></div>
<div class="abs" style="left:1px;top:813px;width:15px;height:16px;border:1px solid #fff;border-radius:2px;background:linear-gradient(135deg,#cbd9fc,#b4c8f8);box-shadow:0 0 0 1px #b0c4f4 inset"></div>
<div class="abs" style="left:172px;top:813px;width:15px;height:16px;border:1px solid #fff;border-radius:2px;background:linear-gradient(135deg,#cbd9fc,#b4c8f8);box-shadow:0 0 0 1px #b0c4f4 inset"></div>
<div class="abs" style="left:17px;top:813px;width:119px;height:16px;border:1px solid #fff;border-radius:2px;background:linear-gradient(#c8d8fc,#bcd0fc 8px,#b4c6f6);box-shadow:0 0 0 1px #a8bcf0 inset"></div>
<svg style="left:0;top:812.5px" width="188" height="17" viewBox="0 0 188 17">
 <path d="M10.4 4.6 L6.4 8.4 L10.4 12.2" fill="none" stroke="#4c6080" stroke-width="1.9"/>
 <path d="M177.4 4.6 L181.4 8.4 L177.4 12.2" fill="none" stroke="#4c6080" stroke-width="1.9"/>
 <path d="M73.5 6 V12 M75.5 6 V12 M77.5 6 V12 M79.5 6 V12" stroke="#eef4fe" stroke-width="1"/>
 <path d="M74.5 6.5 V12.5 M76.5 6.5 V12.5 M78.5 6.5 V12.5 M80.5 6.5 V12.5" stroke="#8ca4dc" stroke-width=".8"/>
</svg>
<div class="abs" style="left:0;top:831px;width:190px;height:2px;background:linear-gradient(#8c8ca2 50%,#101018 50%)"></div>
<!-- collapse handle -->
<div class="abs" style="left:187px;top:454px;width:11px;height:29px;border:1px solid #54546e;border-left:none;border-radius:0 3px 3px 0;background:#e1e4ee;box-shadow:inset -1px 0 0 #9c9cb2, inset 0 1px 0 #9c9cb2, inset 0 -1px 0 #9c9cb2"></div>
<div class="abs" style="left:187px;top:454px;width:2px;height:29px;background:#e1e4ee"></div><div class="abs" style="left:189px;top:455px;width:1px;height:27px;background:#e1e4ee"></div>
<svg style="left:190px;top:455px" width="8" height="28" viewBox="190 455 8 28"><path d="M195 458.4 V462.8 L192 460.6 Z M195 466.4 V470.8 L192 468.6 Z M195 474.4 V478.8 L192 476.6 Z" fill="#5858b0"/></svg>
<!-- ===== COMMAND MANAGER TABS ===== -->
<div class="tab" style="left:1px;width:66px"></div>
<div class="tab" style="left:121px;width:65px"></div>
<div class="tab" style="left:185px;width:68px"></div>
<div class="tab" style="left:252px;width:99px"></div>
<div class="abs" style="left:66px;top:103px;width:56px;height:22px;background:linear-gradient(#c8c8dc 0,#e0e0ec 3px,#f4f4fa 7px,#fafafd 14px,#ededf4 20px);border:1px solid #50506a;border-top:none;border-bottom:2px solid #44445c"></div>
<span class="t" style="left:9.4px;top:105.8px;font-size:12px;line-height:14px;color:#3e3e50;letter-spacing:0.01px;">Features</span>
<span class="t" style="left:75px;top:105.8px;font-size:12px;line-height:14px;color:#1c1c30;letter-spacing:-0.06px;"><b>Sketch</b></span>
<span class="t" style="left:130px;top:105.8px;font-size:12px;line-height:14px;color:#3e3e50;letter-spacing:-0.01px;">Evaluate</span>
<span class="t" style="left:193.4px;top:105.8px;font-size:12px;line-height:14px;color:#3e3e50;letter-spacing:0.05px;">DimXpert</span>
<span class="t" style="left:260.4px;top:105.8px;font-size:12px;line-height:14px;color:#3e3e50;letter-spacing:-0.02px;">Office Products</span>
<!-- ===== GRAPHICS AREA ===== -->
<!-- heads-up view toolbar -->
<svg style="left:670px;top:105px" width="290" height="26" viewBox="670 105 290 26">
 <defs>
  <linearGradient id="gbl" x1="0" y1="0" x2="1" y2="1"><stop offset="0" stop-color="#d4e8fc"/><stop offset="1" stop-color="#4c8ce0"/></linearGradient>
  <radialGradient id="glens" cx=".4" cy=".4" r=".7"><stop offset="0" stop-color="#f4f4f6"/><stop offset="1" stop-color="#b4b8c0"/></radialGradient>
  <radialGradient id="gsh2" cx=".38" cy=".32" r=".75"><stop offset="0" stop-color="#fff" stop-opacity=".55"/><stop offset=".45" stop-color="#fff" stop-opacity="0"/><stop offset="1" stop-color="#000" stop-opacity=".4"/></radialGradient>
  <radialGradient id="gsph" cx=".4" cy=".35" r=".7"><stop offset="0" stop-color="#d8d8d8"/><stop offset="1" stop-color="#bcbcbc"/></radialGradient>
 </defs>
 <!-- zoom to fit -->
 <path d="M685 119 L690.4 124.6" stroke="#3c7cd8" stroke-width="3.2" stroke-linecap="round"/>
 <path d="M685.4 119.4 L690 124.2" stroke="#b4d8fc" stroke-width="1.2" stroke-linecap="round"/>
 <circle cx="681.2" cy="115.2" r="5.6" fill="url(#glens)" stroke="#90949c" stroke-width="1.4"/>
 <rect x="678.6" y="112.6" width="5.2" height="5.2" fill="#d8dce4" stroke="#6c7078" stroke-width=".8" stroke-dasharray="1.6 1"/>
 <!-- zoom to area -->
 <path d="M708.4 119 L713.6 124.6" stroke="#3c7cd8" stroke-width="3.2" stroke-linecap="round"/>
 <path d="M708.8 119.4 L713.2 124.2" stroke="#b4d8fc" stroke-width="1.2" stroke-linecap="round"/>
 <circle cx="704.6" cy="115.2" r="5.6" fill="url(#glens)" stroke="#90949c" stroke-width="1.4"/>
 <rect x="698.8" y="110.6" width="8" height="8" fill="none" stroke="#50545c" stroke-width=".9" stroke-dasharray="2 1.2"/>
 <!-- previous view -->
 <path d="M722 112.6 L724.6 110.8 L736.6 120.2 Q737.4 123.4 734.4 125.2 Q731.4 126.2 730 124.8 Z" fill="url(#gbl)" stroke="#2c6cc8" stroke-width=".9" stroke-linejoin="round"/>
 <path d="M724.4 113 L732 121.4" stroke="#f0f8ff" stroke-width="1.6" stroke-linecap="round"/>
 <ellipse cx="733.6" cy="122.6" rx="3" ry="2.2" fill="#e8f2fc" stroke="#2c6cc8" stroke-width=".8" transform="rotate(-38 733.6 122.6)"/>
 <path d="M731.6 112.6 H737.2 M733.8 110.2 L731.2 112.6 L733.8 115" fill="none" stroke="#2c5cd0" stroke-width="1.4"/>
 <!-- section view -->
 <path d="M745.2 112.4 V122.6 Q747 125 750 125.4 V115 Z" fill="#f8d838" stroke="#2c64c8" stroke-width=".8"/>
 <path d="M758.8 112.4 V122.6 Q757 125 754 125.4 V115 Z" fill="#f8d838" stroke="#2c64c8" stroke-width=".8"/>
 <path d="M747 115.4 L748.6 117 L747 118.6 L748.6 120.2 L747 121.8 L748.6 123.4 M757 115.4 L755.4 117 L757 118.6 L755.4 120.2 L757 121.8 L755.4 123.4" fill="none" stroke="#a07818" stroke-width=".8"/>
 <path d="M750 115 V125.4 H754 V115 Z" fill="#3c78d8"/>
 <path d="M751 115 V125.4" stroke="#8cb8f4" stroke-width="1"/>
 <ellipse cx="752" cy="112.6" rx="6.8" ry="2.6" fill="#a4c8f8" stroke="#2c64c8" stroke-width=".9"/>
 <ellipse cx="752" cy="113" rx="2.6" ry="1" fill="#5c94e8"/>
 <!-- view orientation -->
 <path d="M772.8 110.6 H782.8 V120.6 H772.8 Z M767.6 115.6 L772.8 110.6 M777.6 115.6 L782.8 110.6 M777.6 125.6 L782.8 120.6" fill="none" stroke="#404048" stroke-width=".9"/>
 <rect x="767.6" y="115.6" width="10" height="10" fill="url(#gbl)" stroke="#3868c0" stroke-width=".9"/>
 <path d="M775.4 110.8 V114.8 M773.8 112.4 H777 M778.2 118.2 H782.4 M779.8 116.8 V119.8" stroke="#d81818" stroke-width="1"/>
 <path d="M787.6 118 H793 L790.3 121 Z" fill="#4c4c70"/>
 <!-- display style -->
 <path d="M800.4 115 L805.6 110.4 H815.6 V121 L810.6 125.6 H800.4 Z" fill="#fff" stroke="#50545c" stroke-width=".9"/>
 <path d="M806 115 L810.8 110.4 H815.6 V121 L810.6 125.6 H806 Z" fill="url(#gbl)"/>
 <path d="M800.4 115 H810.6 V125.6 M810.6 115 L815.6 110.4" fill="none" stroke="#50545c" stroke-width=".8"/>
 <path d="M820 118 H825.4 L822.7 121 Z" fill="#4c4c70"/>
 <!-- hide/show glasses -->
 <ellipse cx="835.6" cy="119" rx="2.4" ry="3.2" fill="#cfe4fa" stroke="#60646c" stroke-width="1" transform="rotate(-20 835.6 119)"/>
 <ellipse cx="842.8" cy="121" rx="2.4" ry="3.2" fill="#cfe4fa" stroke="#60646c" stroke-width="1" transform="rotate(-20 842.8 121)"/>
 <path d="M834.2 116 Q836 111.6 838.6 113.4 M838 119.4 Q839.2 118.4 840.6 119.6 M844 118 Q846.6 114.6 848.8 117.4" fill="none" stroke="#60646c" stroke-width="1"/>
 <path d="M853 118 H858.4 L855.7 121 Z" fill="#4c4c70"/>
 <!-- grey sphere (disabled) -->
 <circle cx="873.8" cy="117.8" r="7.8" fill="url(#gsph)"/>
 <!-- appearances -->
 <g fill="#383838"><rect x="889" y="119" width="4" height="2.4"/><rect x="897" y="119" width="4" height="2.4"/><rect x="893" y="121.4" width="4" height="2.4"/><rect x="901" y="121.4" width="4" height="2.4"/><rect x="889" y="123.8" width="4" height="2"/><rect x="897" y="123.8" width="4" height="2"/></g>
 <g transform="rotate(18 897.2 116)"><path d="M897.2 116 V109.6 A6.4 6.4 0 0 1 903.6 116 Z" fill="#e83c3c"/><path d="M897.2 116 H903.6 A6.4 6.4 0 0 1 897.2 122.4 Z" fill="#f0c020"/><path d="M897.2 116 V122.4 A6.4 6.4 0 0 1 890.8 116 Z" fill="#30b040"/><path d="M897.2 116 H890.8 A6.4 6.4 0 0 1 897.2 109.6 Z" fill="#3c7ce0"/></g>
 <circle cx="897.2" cy="116" r="6.4" fill="url(#gsh2)"/>
 <path d="M909 118 H914.4 L911.7 121 Z" fill="#4c4c70"/>
 <!-- view settings (monitor) -->
 <rect x="922.6" y="111.6" width="13.6" height="10.8" fill="#d4d8dc" stroke="#50545c" stroke-width="1.1"/>
 <rect x="924.4" y="113.4" width="10" height="7" fill="#aab0b8"/>
 <path d="M926.4 124.8 H932.4 M924.6 125.8 H934.2" stroke="#70747c" stroke-width="1"/>
 <path d="M925.6 116.6 L929.6 111.8 L933.4 109.8 L937.8 111 L937.4 113.6 L933.4 117 L931 114.6 L927.6 118.2 Z" fill="#ecc090" stroke="#805830" stroke-width=".7"/>
 <path d="M942 118 H947.4 L944.7 121 Z" fill="#4c4c70"/>
</svg>
<!-- document window controls -->
<svg style="left:1371px;top:112px" width="60" height="13" viewBox="0 0 60 13">
 <g stroke="#46464e" fill="none" transform="translate(.8,.8)">
  <path d="M1 9 H9" stroke-width="2"/><path d="M26 2.5 H34 V7 M23.5 5 H31 V10.5 H23.5 Z" stroke-width="1.6"/><path d="M46 1.5 L55 10.5 M55 1.5 L46 10.5" stroke-width="2.2"/>
 </g>
 <g stroke="#a2a2b2" fill="none">
  <path d="M1 9 H9" stroke-width="2"/><path d="M26 2.5 H34 V7 M23.5 5 H31 V10.5 H23.5 Z" stroke-width="1.6"/><path d="M46 1.5 L55 10.5 M55 1.5 L46 10.5" stroke-width="2.2"/>
 </g>
</svg>
<!-- the sketch -->
<svg style="left:600px;top:190px" width="500" height="480" viewBox="600 190 500 480">
 <g stroke="#000" fill="none">
  <!-- dimension: top -->
  <path d="M634.5 220 V289 M990.5 220 V289" stroke-width="1"/>
  <path d="M634.5 222.5 H990.5" stroke-width="1.1"/>
  <path d="M634.5 222.5 L640 221.2 H646 V224.8 H640 Z M990.5 222.5 L985 221.2 H979 V224.8 H985 Z" fill="#000" stroke="none"/>
  <!-- dimension: right -->
  <path d="M991 289.5 H1070.5 M991 645.5 H1070.5" stroke-width="1"/>
  <path d="M1067.5 289.5 V645.5" stroke-width="1.1"/>
  <path d="M1067.5 289.5 L1066.2 295 V301 H1069 V295 Z M1067.5 645.5 L1066.2 640 V634 H1069 V640 Z" fill="#000" stroke="none"/>
  <!-- construction diagonals -->
  <path d="M634.5 289.5 L990.5 645.5" stroke="#202020" stroke-width="1.2" stroke-dasharray="23 3.3 2.6 3.3" stroke-dashoffset="3.3"/>
  <path d="M634.5 645.5 L990.5 289.5" stroke="#202020" stroke-width="1.2" stroke-dasharray="23 3.3 2.6 3.3" stroke-dashoffset="3.3"/>
  <!-- square -->
  <rect x="634.5" y="289.5" width="356" height="356" stroke-width="2"/>
 </g>
 <g fill="#101010"><circle cx="634.5" cy="289.5" r="2.3"/><circle cx="990.5" cy="289.5" r="2.3"/><circle cx="634.5" cy="645.5" r="2.3"/><circle cx="990.5" cy="645.5" r="2.3"/></g>
 <!-- origin -->
 <path d="M809.6 464.8 L815.2 470.4 M815.2 464.8 L809.6 470.4" stroke="#000" stroke-width="1"/>
 <path d="M812.5 468 V436 M812.5 468 H828" stroke="#f00000" stroke-width="1.2" fill="none"/>
 <path d="M811 440.4 H814 V444.2 H811 Z M820 466.4 H822 L826 467.6 V468.4 L822 469.6 H820 Z" fill="#f00000"/>
 <text x="805.3" y="219.6" font-family="Liberation Sans,sans-serif" font-size="20" text-anchor="middle" fill="#000" stroke="#000" stroke-width=".4">8</text>
 <text x="0" y="0" transform="translate(1065 395.8) rotate(-90)" font-family="Liberation Sans,sans-serif" font-size="20" text-anchor="middle" fill="#000" stroke="#000" stroke-width=".4">8</text>
</svg>
<!-- triad -->
<svg style="left:220px;top:730px" width="50" height="52" viewBox="220 730 50 52">
 <rect x="228" y="752" width="4" height="19" fill="#1c6c1c"/>
 <rect x="229.2" y="752" width="1.6" height="19" fill="#6cb86c"/>
 <path d="M230 743.8 L225.8 752.8 H234.2 Z" fill="#1c681c"/>
 <rect x="232" y="772" width="20" height="3.8" fill="#a41818"/>
 <rect x="232" y="773.1" width="20" height="1.6" fill="#ec7070"/>
 <path d="M259.8 773.9 L251 769.8 V778 Z" fill="#b01c1c"/>
 <circle cx="229.8" cy="773.9" r="4.5" fill="#18187c"/>
 <path d="M226.4 771 Q225 774 226.8 777 L229 776.6 Q227.6 774 228.8 771 Z" fill="#0808f0"/>
 <text x="229.6" y="742" text-anchor="middle" font-family="Liberation Sans,sans-serif" font-size="12" fill="#188018">Y</text>
 <text x="263.6" y="778" text-anchor="middle" font-family="Liberation Sans,sans-serif" font-size="12" fill="#f00000" textLength="6" lengthAdjust="spacingAndGlyphs">X</text>
</svg>
<span class="t" style="left:201px;top:815.3px;font-size:12.5px;line-height:14px;color:#14143c;letter-spacing:0.37px;letter-spacing:.4px;"><b>*Front</b></span>
<!-- ===== TASK PANE (right) ===== -->
<div class="abs" style="left:1439px;top:105px;width:1px;height:727px;background:#9ca0b8"></div>
<div class="abs" style="left:1415px;top:165px;width:24px;height:23px;border:1px solid #8a8aa4;border-right:none;border-radius:4px 0 0 4px;background:#c4c4d8"></div>
<div class="abs" style="left:1415px;top:189px;width:24px;height:23px;border:1px solid #8a8aa4;border-right:none;border-radius:4px 0 0 4px;background:#c4c4d8"></div>
<div class="abs" style="left:1415px;top:213px;width:24px;height:23px;border:1px solid #8a8aa4;border-right:none;border-radius:4px 0 0 4px;background:#c4c4d8"></div>
<div class="abs" style="left:1415px;top:237px;width:24px;height:23px;border:1px solid #8a8aa4;border-right:none;border-radius:4px 0 0 4px;background:#c4c4d8"></div>
<div class="abs" style="left:1415px;top:261px;width:24px;height:23px;border:1px solid #a4a4ba;border-right:none;border-radius:4px 0 0 4px;background:#eeeef5"></div>
<div class="abs" style="left:1415px;top:285px;width:24px;height:23px;border:1px solid #8a8aa4;border-right:none;border-radius:4px 0 0 4px;background:#c4c4d8"></div>
<!-- home -->
<svg style="left:1419px;top:168px" width="18" height="17" viewBox="0 0 18 17">
 <rect x="12" y="1" width="2.4" height="6" fill="#d03030"/>
 <path d="M3.4 8.4 V15.6 H14.6 V8.4 L9 3 Z" fill="#fcf0a0" stroke="#a07800" stroke-width="1"/>
 <path d="M1.2 9.4 L9 1.8 L16.8 9.4" fill="none" stroke="#e0a800" stroke-width="2"/>
 <rect x="7.4" y="9.6" width="3.2" height="6" fill="#f8d840" stroke="#806000" stroke-width=".8"/>
</svg>
<!-- design library -->
<svg style="left:1419px;top:192px" width="18" height="17" viewBox="0 0 18 17">
 <path d="M1 8.6 L3.6 6.4 L6.4 8 V15.4 L3.6 16.2 L1 14.6 Z" fill="#20a030" stroke="#0c4c14" stroke-width=".9"/>
 <path d="M6.4 6.8 L8.8 4.6 L11.2 6 V15.4 H6.4 Z" fill="#f4d020" stroke="#5c4800" stroke-width=".9"/>
 <path d="M11.2 4.4 L13.6 1.6 L16.6 3.6 V15.4 H11.2 Z" fill="#3c7ce0" stroke="#14348c" stroke-width=".9"/>
 <path d="M2.4 6.6 L14.4 2.4" stroke="#202020" stroke-width="1.6" stroke-dasharray="2.4 1.4"/>
</svg>
<!-- file explorer -->
<svg style="left:1419px;top:217px" width="18" height="15" viewBox="0 0 18 15">
 <path d="M1 13.6 V2.2 Q1 1 2.2 1 H6 L7.4 2.8 H13.4 V5" fill="#f4c430" stroke="#b07c10" stroke-width="1"/>
 <path d="M4 5 H17.2 L13.6 13.8 H1 Z" fill="#fce88c" stroke="#c08c10" stroke-width="1.1"/>
</svg>
<!-- view palette -->
<svg style="left:1419px;top:240px" width="18" height="18" viewBox="0 0 18 18">
 <rect x="1.6" y=".8" width="15" height="11" fill="#f0f4fc" stroke="#4c5c8c" stroke-width="1.1"/>
 <rect x="3.4" y="2.6" width="4.6" height="2" fill="#f4c430"/><rect x="10.4" y="2.6" width="4.6" height="2.2" fill="#f4c430"/>
 <path d="M3.4 9.4 Q5.6 5.6 8 9.4 Z" fill="#f4c430"/><path d="M3 9.6 H8.4" stroke="#4c5c8c" stroke-width=".8"/>
 <rect x="10.4" y="7" width="4.6" height="1.6" fill="#3c64c8"/><rect x="10.4" y="9.2" width="4.6" height="1.4" fill="#3c64c8"/>
 <path d="M1.6 15 H7.4 M5.2 12.6 L7.8 15 L5.2 17.4" fill="none" stroke="#1010c8" stroke-width="1.5"/>
</svg>
<!-- appearances -->
<svg style="left:1419px;top:264px" width="18" height="18" viewBox="0 0 18 18">
 <ellipse cx="9.4" cy="15.6" rx="6.4" ry="1.6" fill="#9c9ca8" opacity=".7"/>
 <defs><radialGradient id="gsh" cx=".38" cy=".32" r=".75"><stop offset="0" stop-color="#fff" stop-opacity=".55"/><stop offset=".45" stop-color="#fff" stop-opacity="0"/><stop offset="1" stop-color="#000" stop-opacity=".45"/></radialGradient></defs>
 <g transform="rotate(18 9 8.4)">
 <path d="M9 8.4 V1 A7.4 7.4 0 0 1 16.4 8.4 Z" fill="#e83030"/>
 <path d="M9 8.4 H16.4 A7.4 7.4 0 0 1 9 15.8 Z" fill="#f0b820"/>
 <path d="M9 8.4 V15.8 A7.4 7.4 0 0 1 1.6 8.4 Z" fill="#28a838"/>
 <path d="M9 8.4 H1.6 A7.4 7.4 0 0 1 9 1 Z" fill="#2c6ce0"/>
 </g>
 <circle cx="9" cy="8.4" r="7.4" fill="url(#gsh)"/>
</svg>
<!-- custom properties -->
<svg style="left:1419px;top:288px" width="18" height="18" viewBox="0 0 18 18">
 <rect x="2" y="4.6" width="11.6" height="12.4" fill="#f4f4f4" stroke="#60646c" stroke-width="1"/>
 <path d="M4 9 H11.6 M4 11.2 H11.6 M4 13.4 H11.6 M4 15.4 H11.6" stroke="#a8acb4" stroke-width=".9"/>
 <path d="M3.4 7.4 L7.4 3 L11.4 1 L16.2 2.2 L16.6 4.6 L12.6 7.6 L10.4 5.4 L6 9 Z" fill="#e8c090" stroke="#70502c" stroke-width=".8"/>
 <path d="M6 6.6 L8 4.4 M8 7 L10 4.8" stroke="#70502c" stroke-width=".7"/>
</svg>
<!-- ===== BOTTOM TABS + STATUS BAR ===== -->
<div id="btabs" class="abs"></div>
<div class="abs" style="left:190px;top:832px;width:1248px;height:1px;background:#101018"></div>
<div class="abs" style="left:1438px;top:832px;width:2px;height:15px;background:linear-gradient(90deg,#a8a8bc 50%,#d4d4e0 50%)"></div>
<!-- nav buttons -->
<div class="abs" style="left:2px;top:833px;width:67px;height:14px;background:#b4b4c6;border:1px solid #8c8ca2"></div>
<svg style="left:2px;top:833px" width="67" height="14" viewBox="0 0 67 14">
 <path d="M17.5 0 V14 M33.5 0 V14 M49.5 0 V14" stroke="#d0d0de" stroke-width="1"/>
 <path d="M16.5 0 V14 M32.5 0 V14 M48.5 0 V14" stroke="#8c8ca2" stroke-width="1"/>
 <g fill="#9494a8"><path d="M4.4 2.6 H6 V11.4 H4.4 Z M12 2.6 V11.4 L6.4 7 Z"/><path d="M27.6 2.6 V11.4 L22 7 Z"/><path d="M38.4 2.6 V11.4 L44 7 Z"/><path d="M54 2.6 V11.4 L59.6 7 Z M60 2.6 H61.6 V11.4 H60 Z"/></g>
</svg>
<!-- Model tab -->
<div class="abs" style="left:70px;top:833px;width:54px;height:14px;background:linear-gradient(#e8e8f0,#dcdce8);border:1px solid #8c8ca4;border-top:none"></div>
<span class="t" style="left:80.4px;top:832.2px;font-size:12px;line-height:14px;color:#14142c;letter-spacing:-0.10px;"><b>Model</b></span>
<!-- Motion Study tab -->
<div class="abs" style="left:124px;top:833px;width:103px;height:13px;background:#bcbcd0;border:1px solid #6c6c86;border-top:none;box-shadow:0 1px 0 #8c8ca4"></div>
<span class="t" style="left:133.2px;top:832.0px;font-size:12px;line-height:14px;color:#1c1c4c;letter-spacing:-0.16px;">Motion Study 1</span>
<div id="status" class="abs"></div>
<span class="t" style="left:2.6px;top:850.7px;font-size:11px;line-height:13px;color:#000;letter-spacing:-0.17px;">SolidWorks Education Edition - Instructional Use Only</span>
<span class="t" style="left:987.4px;top:850.7px;font-size:11px;line-height:13px;color:#000;letter-spacing:-0.22px;">9.73cm</span>
<span class="t" style="left:1046.8px;top:850.7px;font-size:11px;line-height:13px;color:#000;letter-spacing:-0.19px;">-8.01cm</span>
<span class="t" style="left:1100.8px;top:850.7px;font-size:11px;line-height:13px;color:#000;letter-spacing:-1.09px;">0cm</span>
<span class="t" style="left:1146.8px;top:850.7px;font-size:11px;line-height:13px;color:#000;letter-spacing:-0.22px;">Fully Defined</span>
<span class="t" style="left:1226.8px;top:850.7px;font-size:11px;line-height:13px;color:#000;letter-spacing:-0.35px;">Editing Sketch1</span>
<div class="abs" style="left:1214px;top:850px;width:1px;height:13px;background:#f4f4fa"></div>
<div class="abs" style="left:1221px;top:850px;width:1px;height:13px;background:#f4f4fa"></div>
<div class="abs" style="left:1305px;top:850px;width:1px;height:13px;background:#f4f4fa"></div>
<div class="abs" style="left:1312px;top:850px;width:1px;height:13px;background:#f4f4fa"></div>
<div class="abs" style="left:1334px;top:850px;width:1px;height:13px;background:#f4f4fa"></div>
<svg style="left:1319px;top:850px" width="8" height="13" viewBox="0 0 8 13">
 <rect x=".4" y=".4" width="7.2" height="12.2" rx="2.2" fill="#383838"/>
 <circle cx="4" cy="3.6" r="2.1" fill="#e82828"/><circle cx="4" cy="9.2" r="2.1" fill="#28d828"/>
</svg>
<svg style="left:1346px;top:850px" width="13" height="13" viewBox="0 0 13 13">
 <rect x=".6" y=".6" width="11.8" height="11.8" fill="#fff" stroke="#184c9c" stroke-width="1.2"/>
 <text x="6.5" y="10.6" text-anchor="middle" font-family="Liberation Sans,sans-serif" font-weight="bold" font-size="11" fill="#18a018">?</text>
</svg>
<svg style="left:1409px;top:849px" width="16" height="16" viewBox="0 0 16 16">
 <path d="M1.4 9.4 L8.6 2 L13.6 1.6 Q14.6 1.6 14.6 2.8 L14.2 7.6 L6.8 14.8 Q6 15.4 5.2 14.6 L1.4 10.8 Q.8 10 1.4 9.4 Z" fill="#f8c800" stroke="#b87400" stroke-width="1.2"/>
 <path d="M4.6 9 L8 12.4 M6.2 7.4 L9.6 10.8 M7.8 5.8 L11.2 9.2" stroke="#c88c00" stroke-width=".9"/>
 <circle cx="11.8" cy="4.4" r="1.4" fill="#f4f4ff" stroke="#906000" stroke-width=".5"/>
</svg>
<!-- ===== WINDOWS XP TASKBAR ===== -->
<div id="taskbar" class="abs"></div>
<!-- start button -->
<div class="abs" style="left:0;top:870px;width:97px;height:30px;border-radius:0 12px 14px 0/0 14px 16px 0;background:linear-gradient(#3c8c3c 0,#55b055 3px,#3f9f3f 7px,#3a973a 20px,#2f862f 27px,#256e25 30px);box-shadow:inset -3px 0 4px -1px #1c5c1c, inset 0 2px 2px -1px #8cd08c, 2px 0 3px #1c3c9c"></div>
<svg style="left:10px;top:876px" width="20" height="18" viewBox="0 0 20 18">
 <path d="M3.4 2.4 Q6.4 .6 9.2 2.4 L7.8 8 Q5 6.4 2 8 Z" fill="#f05828"/>
 <path d="M10.4 2.8 Q13.4 4.4 16.6 2.8 L15 8.4 Q12 10 9 8.4 Z" fill="#80c838"/>
 <path d="M1.8 9 Q4.6 7.4 7.6 9 L6.2 14.6 Q3.4 13 .4 14.6 Z" fill="#4c8cf0"/>
 <path d="M8.6 9.6 Q11.8 11.2 14.8 9.6 L13.4 15.2 Q10.2 16.8 7.2 15.2 Z" fill="#f8c820"/>
</svg>
<span class="t" style="left:35.4px;top:874.9px;font-size:17.5px;line-height:20px;color:#fff;letter-spacing:-0.07px;text-shadow:1px 1px 2px #1c4c1c;"><b><i>start</i></b></span>
<!-- task button -->
<div class="abs" style="left:107px;top:873px;width:159px;height:24px;border-radius:3px;background:linear-gradient(#5c9cf8 0,#3c84f4 3px,#3a80f2 18px,#336fe0 24px);box-shadow:inset 1px 1px 0 #74acfc, inset -1px -1px 0 #2858c8"></div>
<svg style="left:115px;top:876px" width="18" height="17" viewBox="0 0 18 17">
 <polygon points="1,4.4 8,1 17,3.8 17,12.4 10,16.4 1,13.6" fill="#c81818"/>
 <polygon points="1,4.4 8,1 17,3.8 10,7.2" fill="#f07070"/>
 <polygon points="10,7.2 17,3.8 17,12.4 10,16.4" fill="#a01010"/>
 <text x="1.6" y="13.8" font-family="Liberation Sans,sans-serif" font-weight="bold" font-size="10" fill="#fff">S</text>
 <text x="9.2" y="14" font-family="Liberation Sans,sans-serif" font-weight="bold" font-size="10" fill="#fff" textLength="7.6" lengthAdjust="spacingAndGlyphs">W</text>
</svg>
<span class="t" style="left:135.8px;top:878.7px;font-size:11px;line-height:13px;color:#fff;letter-spacing:-0.17px;">SolidWorks Education...</span>
<!-- tray -->
<div class="abs" style="left:1239px;top:870px;width:201px;height:30px;background:linear-gradient(#1464c4 0,#2ba4f4 2px,#1a96f0 5px,#1590ec 20px,#1284e0 26px,#0c60b4 30px);box-shadow:inset 1px 0 0 #0c3c94, inset 2px 0 0 #3cb0fc"></div>
<svg style="left:1228px;top:872px" width="200" height="26" viewBox="1228 872 200 26">
 <defs><radialGradient id="gtr" cx=".4" cy=".35" r=".75"><stop offset="0" stop-color="#9cd4fc"/><stop offset=".6" stop-color="#2c84e8"/><stop offset="1" stop-color="#1c54b8"/></radialGradient>
 <radialGradient id="gor" cx=".4" cy=".35" r=".75"><stop offset="0" stop-color="#fcc060"/><stop offset=".6" stop-color="#f07810"/><stop offset="1" stop-color="#b84800"/></radialGradient></defs>
 <circle cx="1239.6" cy="885.6" r="8.6" fill="url(#gtr)" stroke="#a8d4fc" stroke-width=".8"/>
 <path d="M1241.6 881.6 L1237.4 885.6 L1241.6 889.6" fill="none" stroke="#fff" stroke-width="2"/>
 <!-- shield -->
 <path d="M1258 877.6 Q1261 879.6 1264.4 879.4 Q1264.6 888.6 1258 892.2 Q1251.4 888.6 1251.6 879.4 Q1255 879.6 1258 877.6 Z" fill="#f4d020" stroke="#8c7c3c" stroke-width="1.1"/>
 <path d="M1258 880.6 V887 M1258 888.4 V890" stroke="#282828" stroke-width="1.8"/>
 <!-- pdf -->
 <rect x="1269" y="879" width="13.4" height="12.4" fill="#c81010" stroke="#800808" stroke-width=".6"/>
 <path d="M1270.6 889.6 Q1275 886 1276.6 881 Q1277 879.8 1276 880.2 Q1275 882 1278 885.6 Q1280 887.4 1281.4 886.4 Q1279 885.2 1272 887.6" fill="none" stroke="#fff" stroke-width="1"/>
 <path d="M1280.4 877.4 L1283.4 880.4 L1280.6 883 L1277.6 880.2 Z" fill="#f4c020" stroke="#a06000" stroke-width=".6"/>
 <!-- network disconnected -->
 <rect x="1291" y="877.6" width="8.4" height="6.8" fill="#3c4c9c" stroke="#c8d0e0" stroke-width="1"/>
 <rect x="1286.4" y="881.4" width="8.4" height="6.8" fill="#2c3c84" stroke="#c8d0e0" stroke-width="1"/>
 <path d="M1287.6 890.6 H1294.4 M1292.6 886.6 H1299.6" stroke="#d4d8e4" stroke-width="1.6"/>
 <path d="M1294.4 886 L1301 892.6 M1301 886 L1294.4 892.6" stroke="#e82020" stroke-width="2"/>
 <!-- wireless -->
 <rect x="1305" y="879.4" width="9" height="7" fill="#2c3c84" stroke="#c8d0e0" stroke-width="1"/>
 <path d="M1305 889.6 H1313.4" stroke="#d4d8e4" stroke-width="1.8"/>
 <path d="M1315 880 Q1316.6 881.6 1315 883.4 M1317 878.6 Q1319.4 881.6 1317 884.8 M1319 877 Q1322 881.6 1319 886.2" fill="none" stroke="#e0e8f4" stroke-width="1"/>
 <!-- green check -->
 <path d="M1323.6 881 L1326 885 L1323 889 L1326.4 889.6 L1327.4 892.6 L1330.4 890.4 L1333.4 892.6 L1333.6 888.6" fill="#e0e0e0" stroke="#8c8c8c" stroke-width=".7"/>
 <circle cx="1331" cy="883.6" r="5.6" fill="#38a838" stroke="#d0e8d0" stroke-width="1"/>
 <path d="M1328.2 883.6 L1330.4 885.8 L1334 881.6" fill="none" stroke="#fff" stroke-width="1.6"/>
 <!-- orange -->
 <circle cx="1348" cy="885.2" r="7.8" fill="url(#gor)"/>
 <path d="M1351.6 888.6 V884.6 A3.6 3.6 0 1 0 1348 888.2" fill="none" stroke="#fff" stroke-width="2.2"/>
 <!-- black square -->
 <rect x="1358.4" y="877" width="15.2" height="15.6" fill="#383838"/>
 <g fill="#68e010"><rect x="1362" y="880" width="1.4" height="1.4"/><rect x="1364.4" y="881.4" width="1.4" height="1.4"/><rect x="1366.8" y="882.4" width="1.4" height="1.4"/><rect x="1369.2" y="883.4" width="1.4" height="1.4"/><rect x="1360.8" y="882.6" width="1.4" height="1.4"/><rect x="1360" y="885.2" width="1.4" height="1.4"/><rect x="1360" y="887.8" width="1.4" height="1.4"/><rect x="1361.2" y="890" width="1.4" height="1.4"/><rect x="1364" y="890.6" width="1.4" height="1.4"/><rect x="1366.6" y="890.6" width="1.4" height="1.4"/><rect x="1369" y="889.4" width="1.4" height="1.4"/><rect x="1369.6" y="887" width="1.4" height="1.4"/><rect x="1367" y="886.6" width="1.4" height="1.4"/></g>
</svg>
<span class="t" style="left:1381.6px;top:878.7px;font-size:11px;line-height:13px;color:#fff;letter-spacing:-0.53px;">10:55 PM</span>
</body>
</html>
